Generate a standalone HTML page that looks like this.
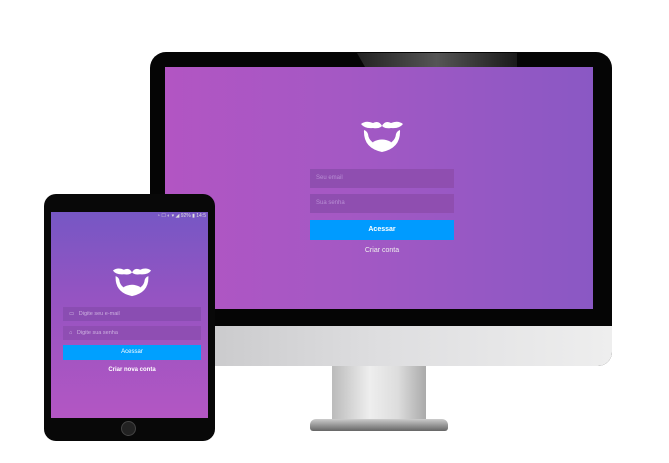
<!DOCTYPE html>
<html><head><style>
*{margin:0;padding:0;box-sizing:border-box}
body{width:669px;height:463px;background:#fff;position:relative;overflow:hidden;font-family:"Liberation Sans",sans-serif}
.a{position:absolute}
</style></head><body>
<!-- monitor -->
<div class="a" style="left:150px;top:52px;width:462px;height:314px;background:#050505;border-radius:16px 16px 14px 14px"></div>
<div class="a" style="left:150px;top:326px;width:462px;height:40px;background:linear-gradient(90deg,#c4c4c6,#dedee0 50%,#eeeeee);border-radius:0 0 14px 14px"></div>
<div class="a" style="left:357px;top:53px;width:160px;height:14px;background:linear-gradient(90deg,#222,#555,#1a1a1a);clip-path:polygon(0 0,100% 0,100% 100%,5% 100%)"></div>
<div class="a" style="left:165px;top:67px;width:428px;height:242px;background:linear-gradient(90deg,#b255c3,#a558c4 40%,#8a58c4)"></div>
<svg class="a" style="left:360px;top:120px" width="44" height="33" viewBox="0 0 44 33"><path d="M1 4 Q6 0 13 3 Q19 0 22 6 Q25 0 31 3 Q38 0 43 4 Q39 9 31 8 Q25 9 22 6 Q19 9 13 8 Q5 9 1 4Z" fill="#fff"/><path d="M4 10 Q7 11 8 14 Q9 24 22 25 Q35 24 36 14 Q37 11 40 10 Q41 28 22 32 Q3 28 4 10Z" fill="#fff"/><path d="M13 22 Q22 17 31 22 Q28 30 22 30 Q16 30 13 22Z" fill="#fff"/></svg>
<div class="a" style="left:310px;top:169px;width:144px;height:19px;background:#8f4eb0;color:#b88ed4;font-size:6px;padding:6px 6px">Seu email</div>
<div class="a" style="left:310px;top:194px;width:144px;height:19px;background:#8f4eb0;color:#b88ed4;font-size:6px;padding:6px 6px">Sua senha</div>
<div class="a" style="left:310px;top:220px;width:144px;height:20px;background:#009bff;color:#fff;font-size:7px;font-weight:bold;text-align:center;line-height:20px">Acessar</div>
<div class="a" style="left:310px;top:247px;width:144px;color:#eee;font-size:7px;text-align:center">Criar conta</div>
<!-- stand -->
<div class="a" style="left:332px;top:366px;width:94px;height:58px;background:linear-gradient(90deg,#bbb,#eee 40%,#ddd 70%,#aaa)"></div>
<div class="a" style="left:310px;top:419px;width:138px;height:12px;background:linear-gradient(180deg,#ccc,#666);border-radius:6px 6px 3px 3px"></div>
<!-- tablet -->
<div class="a" style="left:44px;top:194px;width:171px;height:247px;background:#080808;border-radius:12px"></div>
<div class="a" style="left:51px;top:212px;width:157px;height:206px;background:linear-gradient(180deg,#7657c4,#9454c2 40%,#b356c3)"></div>
<div class="a" style="left:54px;top:213px;width:152px;font-size:5px;color:#ddd;text-align:right">◔ ☐ ◐ ▾ ◢ 92% ▮ 14:5</div>
<svg class="a" style="left:111px;top:267px" width="42" height="30" viewBox="0 0 44 33"><path d="M1 4 Q6 0 13 3 Q19 0 22 6 Q25 0 31 3 Q38 0 43 4 Q39 9 31 8 Q25 9 22 6 Q19 9 13 8 Q5 9 1 4Z" fill="#fff"/><path d="M4 10 Q7 11 8 14 Q9 24 22 25 Q35 24 36 14 Q37 11 40 10 Q41 28 22 32 Q3 28 4 10Z" fill="#fff"/><path d="M13 22 Q22 17 31 22 Q28 30 22 30 Q16 30 13 22Z" fill="#fff"/></svg>
<div class="a" style="left:63px;top:307px;width:138px;height:14px;background:#8a4db2;color:#ccb0e0;font-size:5.5px;padding:4px 6px">▭ &nbsp; Digite seu e-mail</div>
<div class="a" style="left:63px;top:326px;width:138px;height:14px;background:#8f4eb3;color:#ccb0e0;font-size:5.5px;padding:4px 6px">⌂ &nbsp; Digite sua senha</div>
<div class="a" style="left:63px;top:345px;width:138px;height:15px;background:#00a0ff;color:#fff;font-size:6px;text-align:center;line-height:15px">Acessar</div>
<div class="a" style="left:63px;top:367px;width:138px;color:#fff;font-size:6px;font-weight:bold;text-align:center">Criar nova conta</div>
<div class="a" style="left:121px;top:421px;width:15px;height:15px;border-radius:50%;background:#222;border:1px solid #444"></div>
</body></html>
